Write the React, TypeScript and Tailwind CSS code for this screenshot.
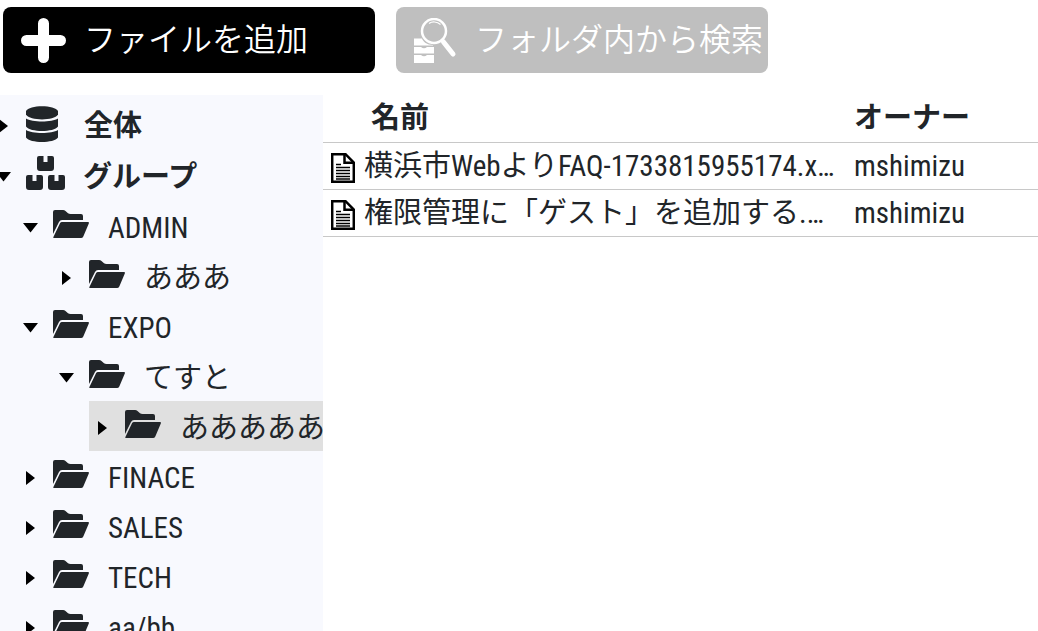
import React from "react";

type Folder = {
  name: string;
  open?: boolean;
  selected?: boolean;
  children?: Folder[];
};

const folders: Folder[] = [
  { name: "ADMIN", open: true, children: [{ name: "あああ" }] },
  {
    name: "EXPO",
    open: true,
    children: [
      {
        name: "てすと",
        open: true,
        children: [{ name: "あああああ", selected: true }],
      },
    ],
  },
  { name: "FINACE" },
  { name: "SALES" },
  { name: "TECH" },
  { name: "aa/bb" },
];

const files = [
  { name: "横浜市WebよりFAQ-1733815955174.xlsx", owner: "mshimizu" },
  { name: "権限管理に「ゲスト」を追加する.xlsx", owner: "mshimizu" },
];

const Toggle = ({ open, label }: { open?: boolean; label: string }) => (
  <button
    type="button"
    aria-label={label}
    aria-expanded={!!open}
    className="w-[27px] mr-[9px] mt-1 shrink-0 flex items-center justify-center text-black"
  >
    {open ? (
      <svg width="15" height="10" viewBox="0 0 15 10" fill="currentColor">
        <path d="M0 0h15L7.500 9.500z" />
      </svg>
    ) : (
      <svg width="9" height="14" viewBox="0 0 9 14" fill="currentColor">
        <path d="M0 0L9 7L0 14z" />
      </svg>
    )}
  </button>
);

const FolderIcon = () => (
  <svg
    width="36"
    height="28"
    viewBox="0 0 36 28"
    fill="currentColor"
    className="mr-[19px] mb-1 shrink-0"
  >
    <path d="M0 24V2Q0 0 2 0H10Q11.500 0 12.500 1L15 3.200Q16 4 17.500 4H28Q30 4 30 6V10H9Q7 10 6 12z" />
    <path d="M9 12H35Q36.400 12 35.800 13.500L30.300 26.500Q29.600 28 28 28H1Q0 28 0.400 27L7 13.300Q7.600 12 9 12z" />
  </svg>
);

const DatabaseIcon = () => (
  <svg
    width="32"
    height="36"
    viewBox="0 0 32 36"
    fill="currentColor"
    className="mr-[26px] shrink-0"
  >
    <path d="M0 5C3 -1.500 29 -1.500 32 5V8.500C28 15 4 15 0 8.500z" />
    <path d="M0 12.500C6 16.500 26 16.500 32 12.500V20.500C28 26.500 4 26.500 0 20.500z" />
    <path d="M0 24C6 28 26 28 32 24V31.500C28 37.500 4 37.500 0 31.500z" />
  </svg>
);

const BoxesIcon = () => (
  <svg
    width="39"
    height="34"
    viewBox="0 0 39 34"
    fill="currentColor"
    className="mr-[18px] mb-1 shrink-0"
  >
    <path d="M13 0H17.500V6H21.500V0H26Q28 0 28 2V12Q28 15 25 15H14Q11 15 11 12V2Q11 0 13 0z" />
    <path d="M2 19H6.500V25H10.500V19H15Q17 19 17 21V31Q17 34 14 34H3Q0 34 0 31V21Q0 19 2 19z" />
    <path d="M24 19H28.500V25H32.500V19H37Q39 19 39 21V31Q39 34 36 34H25Q22 34 22 31V21Q22 19 24 19z" />
  </svg>
);

const FolderRow = ({ folder }: { folder: Folder }) => (
  <li>
    <div
      className={`flex items-center h-[50px] ${folder.selected ? "bg-[#e0e0e0]" : ""}`}
    >
      <Toggle open={folder.open} label={folder.name} />
      <FolderIcon />
      <span className="whitespace-nowrap mt-1">{folder.name}</span>
    </div>
    {folder.children && (
      <ul className="pl-9">
        {folder.children.map((child) => (
          <FolderRow key={child.name} folder={child} />
        ))}
      </ul>
    )}
  </li>
);

const DocumentIcon = () => (
  <svg
    width="24"
    height="30"
    viewBox="0 0 24 30"
    fill="none"
    stroke="black"
    className="mt-1 shrink-0"
  >
    <path strokeWidth="2.500" d="M1.200 1.200H14.500L22.800 9.500V28.800H1.200z" />
    <path strokeWidth="2.500" d="M13.500 1V9.800H23" />
    <path
      strokeWidth="1.400"
      d="M5 11.500H10M5 14.500H19M5 17.500H19M5 20.500H19M5 23.500H19M5 26H19"
    />
  </svg>
);

const PlusIcon = () => (
  <svg
    width="45"
    height="45"
    viewBox="0 0 45 45"
    stroke="white"
    strokeWidth="11"
    strokeLinecap="round"
    className="shrink-0"
  >
    <path d="M22.500 5.500V39.500M5.500 22.500H39.500" />
  </svg>
);

const CabinetSearchIcon = () => (
  <svg
    width="45"
    height="45"
    viewBox="0 0 45 45"
    fill="none"
    className="shrink-0"
  >
    <path
      fill="white"
      d="M2 20.500H10C11 23.500 15 27 21 27V27.500H2zM2 29H9Q12 31.500 15 29H22V35.500H2zM2 37H9Q12 39.500 15 37H22V45H2z"
    />
    <circle cx="22" cy="13" r="12" stroke="white" strokeWidth="2.500" />
    <path stroke="white" strokeWidth="1.200" d="M17 5.500C20 3.300 25 3.300 28.500 6.500" />
    <path stroke="white" strokeWidth="2" d="M28 23.500L32 20" />
    <path
      stroke="white"
      strokeWidth="5"
      strokeLinecap="round"
      d="M31.500 24L41 36"
    />
  </svg>
);

const App = () => {
  return (
    <div className="h-screen overflow-hidden flex flex-col bg-white text-[#212529] text-[29px] leading-9 font-['Roboto_Condensed','Liberation_Sans_Narrow','Noto_Sans_CJK_JP',sans-serif]">
      {/* Toolbar */}
      <header className="flex gap-[21px] pl-[3px] pt-[7px] pb-[22px] text-[32px] text-white font-[350]">
        <button
          type="button"
          className="w-[372px] h-[66px] pl-[18px] rounded-lg bg-black flex items-center gap-[18px] whitespace-nowrap"
        >
          <PlusIcon />
          ファイルを追加
        </button>
        <button
          type="button"
          className="w-[372px] h-[66px] pl-4 rounded-lg bg-[#bfbfbf] flex items-center gap-[18px] whitespace-nowrap"
        >
          <CabinetSearchIcon />
          フォルダ内から検索
        </button>
      </header>

      <div className="flex flex-1 min-h-0">
        {/* Folder tree */}
        <nav className="w-[323px] shrink-0 overflow-hidden bg-[#f8f9fe] pt-[3px]">
          <ul className="-ml-[10px]">
            <li className="flex items-center h-[51px]">
              <Toggle label="全体" />
              <DatabaseIcon />
              <span className="font-bold mt-1">全体</span>
            </li>
            <li>
              <div className="flex items-center h-[51px]">
                <Toggle open label="グループ" />
                <BoxesIcon />
                <span className="font-bold mt-1">グループ</span>
              </div>
              <ul className="pl-[27px] pt-px">
                {folders.map((folder) => (
                  <FolderRow key={folder.name} folder={folder} />
                ))}
              </ul>
            </li>
          </ul>
        </nav>

        {/* File list */}
        <main className="flex-1 min-w-0">
          <table className="w-full table-fixed border-collapse text-left">
            <thead>
              <tr className="h-[47px] border-b border-[#c8c8c8]">
                <th className="w-[522px] pl-12 font-bold">名前</th>
                <th className="pl-[9px] font-bold">オーナー</th>
              </tr>
            </thead>
            <tbody>
              {files.map((file) => (
                <tr
                  key={file.name}
                  className="h-[47px] border-b border-[#c8c8c8]"
                >
                  <td className="pl-2 pr-[10px]">
                    <a href="#" className="flex items-center gap-[9px]">
                      <DocumentIcon />
                      <span className="truncate">{file.name}</span>
                    </a>
                  </td>
                  <td className="pl-[9px]">{file.owner}</td>
                </tr>
              ))}
            </tbody>
          </table>
        </main>
      </div>
    </div>
  );
};

export default App;
